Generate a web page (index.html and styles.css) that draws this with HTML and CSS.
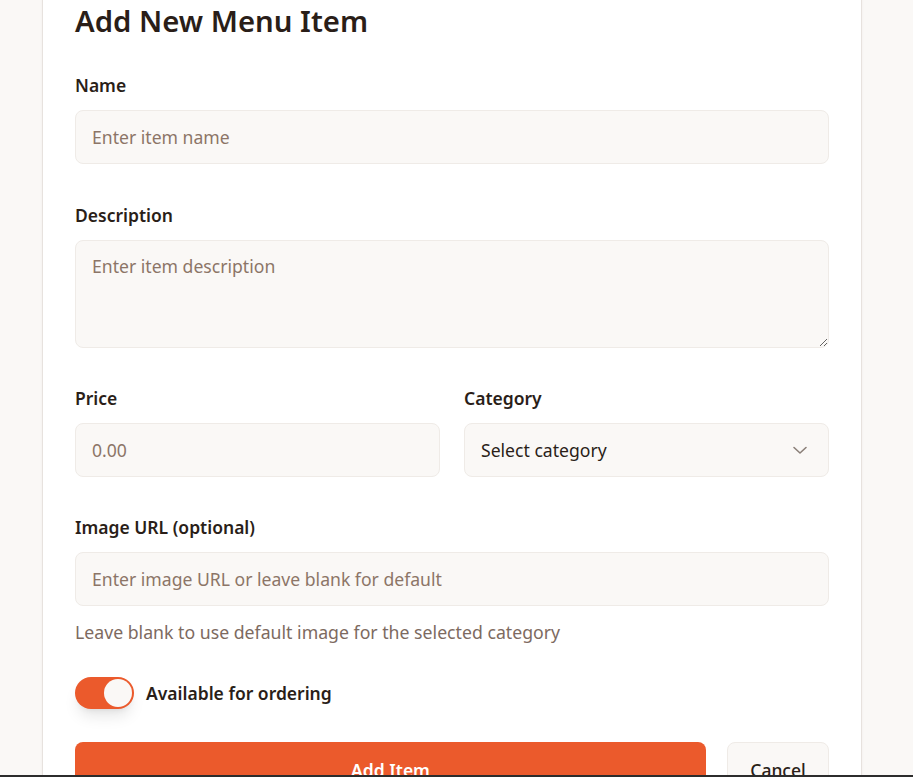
FILE: index.html
```html
<!DOCTYPE html>
<html lang="en">
<head>
<meta charset="utf-8">
<title>Add New Menu Item</title>
<link rel="stylesheet" href="styles.css">
</head>
<body>
<div class="page">
  <div class="card">
    <h2 class="title">Add New Menu Item</h2>
    <form class="form">
      <div class="field field-first">
        <label class="label">Name</label>
        <input class="input" type="text" placeholder="Enter item name">
      </div>
      <div class="field">
        <label class="label">Description</label>
        <textarea class="input textarea" placeholder="Enter item description"></textarea>
      </div>
      <div class="field row">
        <div class="col">
          <label class="label">Price</label>
          <input class="input" type="text" placeholder="0.00">
        </div>
        <div class="col">
          <label class="label">Category</label>
          <div class="select">
            <span>Select category</span>
            <svg class="chevron" width="16" height="16" viewBox="0 0 16 16"><path d="M2 5.5l6 5.5 6-5.5" fill="none" stroke="#8a7f78" stroke-width="1.6" stroke-linecap="round" stroke-linejoin="round"/></svg>
          </div>
        </div>
      </div>
      <div class="field">
        <label class="label">Image URL (optional)</label>
        <input class="input" type="text" placeholder="Enter image URL or leave blank for default">
        <p class="help">Leave blank to use default image for the selected category</p>
      </div>
      <div class="toggle-row">
        <span class="toggle"><span class="knob"></span></span>
        <span class="toggle-label">Available for ordering</span>
      </div>
      <div class="actions">
        <button type="button" class="btn btn-primary">Add Item</button>
        <button type="button" class="btn btn-secondary">Cancel</button>
      </div>
    </form>
  </div>
</div>
<div class="edge"></div>
</body>
</html>
```

FILE: styles.css
```css
* { box-sizing: border-box; }

html, body {
  margin: 0;
  background: #faf8f6;
  font-family: "Noto Sans", "Open Sans", sans-serif;
  color: #2a1e18;
  overflow: hidden;
}

.page {
  padding-left: 42px;
}

.card {
  width: 820px;
  margin-top: -30px;
  background: #ffffff;
  border: 1px solid #e7e2de;
  border-radius: 12px;
  padding: 32px 32px 40px;
  box-shadow: 0 1px 3px rgba(60, 40, 30, 0.05);
}

.title {
  margin: 0 0 34px;
  font-size: 29.3px;
  line-height: 36px;
  font-weight: 600;
  color: #2a1e18;
}

.form { display: flex; flex-direction: column; }

.field {
  display: flex;
  flex-direction: column;
  margin-bottom: 38px;
}

.field-first { margin-bottom: 39px; }

.row {
  flex-direction: row;
  gap: 24px;
}

.col {
  flex: 1;
  display: flex;
  flex-direction: column;
}

.label {
  font-size: 17.5px;
  line-height: 24px;
  font-weight: 600;
  margin-bottom: 13px;
  color: #2a1e18;
}

.input {
  width: 100%;
  height: 54px;
  padding: 0 16px;
  background: #faf8f6;
  border: 1px solid #efebe7;
  border-radius: 8px;
  font-family: inherit;
  font-size: 17.6px;
  color: #2a1e18;
  outline: none;
}

.input::placeholder { color: #8c7567; }

.textarea {
  height: 108px;
  padding: 13px 16px;
  line-height: 24px;
  resize: vertical;
}

.select {
  height: 54px;
  display: flex;
  align-items: center;
  justify-content: space-between;
  padding: 0 20px 0 16px;
  background: #faf8f6;
  border: 1px solid #efebe7;
  border-radius: 8px;
  font-size: 17.6px;
  color: #2a1e18;
}

.chevron { display: block; }

.help {
  margin: 14px 0 0;
  font-size: 17.7px;
  line-height: 24px;
  color: #7d6a5f;
}

.toggle-row {
  display: flex;
  align-items: center;
  gap: 12px;
  margin-top: -5px;
  margin-bottom: 33px;
}

.toggle {
  width: 59px;
  height: 32px;
  border-radius: 16px;
  background: #eb5a2c;
  display: flex;
  align-items: center;
  justify-content: flex-end;
  padding: 0 2px;
  box-shadow: 0 10px 15px -3px rgba(0, 0, 0, 0.1), 0 4px 6px -4px rgba(0, 0, 0, 0.1);
}

.knob {
  width: 28px;
  height: 28px;
  border-radius: 50%;
  background: #faf8f6;
}

.toggle-label {
  font-size: 17.5px;
  font-weight: 600;
  color: #2a1e18;
}

.actions {
  display: flex;
  gap: 21px;
}

.btn {
  height: 56px;
  border-radius: 8px;
  font-family: inherit;
  font-size: 17.5px;
  cursor: pointer;
}

.btn-primary {
  flex: 1;
  background: #eb5a2c;
  border: none;
  color: #ffffff;
  font-weight: 600;
}

.btn-secondary {
  width: 102px;
  background: #faf8f6;
  border: 1px solid #efebe7;
  color: #2a1e18;
  font-weight: 500;
}

.edge {
  position: fixed;
  left: 0;
  right: 0;
  bottom: 0;
  height: 2px;
  background: #2c2c2c;
}
```
